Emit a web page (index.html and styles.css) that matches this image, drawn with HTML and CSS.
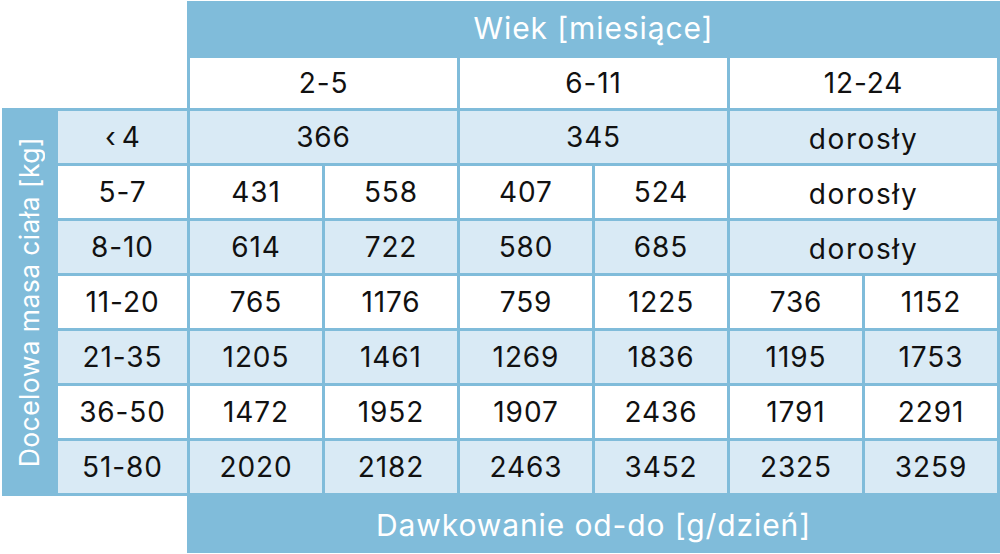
FILE: index.html
```html
<!DOCTYPE html>
<html lang="pl">
<head>
<meta charset="utf-8">
<title>Dawkowanie</title>
<link rel="stylesheet" href="styles.css">
</head>
<body>
<div class="table">
  <div class="corner corner-top"></div>
  <div class="head head-main">Wiek [miesiące]</div>
  <div class="cell white span2">2-5</div>
  <div class="cell white span2">6-11</div>
  <div class="cell white span2">12-24</div>

  <div class="band"><span class="band-text">Docelowa masa ciała [kg]</span></div>

  <div class="cell light label lt">‹4</div>
  <div class="cell light span2">366</div>
  <div class="cell light span2">345</div>
  <div class="cell light span2 word">dorosły</div>

  <div class="cell white label">5-7</div>
  <div class="cell white">431</div>
  <div class="cell white">558</div>
  <div class="cell white">407</div>
  <div class="cell white">524</div>
  <div class="cell white span2 word">dorosły</div>

  <div class="cell light label">8-10</div>
  <div class="cell light">614</div>
  <div class="cell light">722</div>
  <div class="cell light">580</div>
  <div class="cell light">685</div>
  <div class="cell light span2 word">dorosły</div>

  <div class="cell white label">11-20</div>
  <div class="cell white">765</div>
  <div class="cell white">1176</div>
  <div class="cell white">759</div>
  <div class="cell white">1225</div>
  <div class="cell white">736</div>
  <div class="cell white">1152</div>

  <div class="cell light label">21-35</div>
  <div class="cell light">1205</div>
  <div class="cell light">1461</div>
  <div class="cell light">1269</div>
  <div class="cell light">1836</div>
  <div class="cell light">1195</div>
  <div class="cell light">1753</div>

  <div class="cell white label">36-50</div>
  <div class="cell white">1472</div>
  <div class="cell white">1952</div>
  <div class="cell white">1907</div>
  <div class="cell white">2436</div>
  <div class="cell white">1791</div>
  <div class="cell white">2291</div>

  <div class="cell light label">51-80</div>
  <div class="cell light">2020</div>
  <div class="cell light">2182</div>
  <div class="cell light">2463</div>
  <div class="cell light">3452</div>
  <div class="cell light">2325</div>
  <div class="cell light">3259</div>

  <div class="corner corner-bottom"></div>
  <div class="head head-foot">Dawkowanie od-do [g/dzień]</div>
</div>
</body>
</html>
```

FILE: styles.css
```css
html, body {
  margin: 0;
  padding: 0;
  background: #ffffff;
}

body {
  width: 1000px;
  height: 554px;
  overflow: hidden;
  font-family: "Inter", "Noto Sans", sans-serif;
}

.table {
  display: grid;
  grid-template-columns: 53px 129px repeat(6, 132px);
  grid-template-rows: 54px 50px repeat(7, 52px) 57px;
  gap: 3px;
  width: fit-content;
  margin: 1px 0 0 2px;
  padding-right: 3px;
  background: #80bcda;
}

.corner {
  background: #ffffff;
  grid-column: 1 / 3;
}

.corner-top {
  grid-row: 1 / 3;
}

.corner-bottom {
  grid-row: 10;
}

.head {
  grid-column: 3 / 9;
  display: flex;
  align-items: center;
  justify-content: center;
  color: #ffffff;
  font-size: 30px;
  font-weight: 400;
  letter-spacing: 0.9px;
}

.head-main {
  grid-row: 1;
}

.head-foot {
  grid-row: 10;
}

.band {
  grid-column: 1;
  grid-row: 3 / 10;
  display: flex;
  align-items: center;
  justify-content: center;
}

.band-text {
  writing-mode: vertical-rl;
  transform: rotate(180deg);
  color: #ffffff;
  font-size: 26.5px;
  font-weight: 400;
  letter-spacing: 0.4px;
  white-space: nowrap;
}

.cell {
  display: flex;
  align-items: center;
  justify-content: center;
  color: #111111;
  font-size: 28px;
  font-weight: 400;
  letter-spacing: 0.9px;
}

.white {
  background: #ffffff;
}

.light {
  background: #d9eaf5;
}

.span2 {
  grid-column: span 2;
}

.label {
  grid-column: 2;
}

.lt {
  letter-spacing: 6px;
  padding-left: 6px;
}

.word {
  padding-top: 4px;
  letter-spacing: 1.6px;
}
```
